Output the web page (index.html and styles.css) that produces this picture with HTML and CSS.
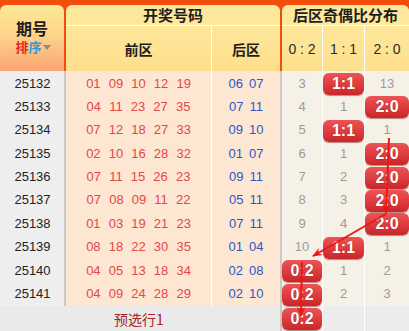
FILE: index.html
```
<!DOCTYPE html>
<html lang="zh">
<head>
<meta charset="utf-8">
<title>开奖号码 后区奇偶比分布</title>
<link rel="stylesheet" href="styles.css">
</head>
<body>
<div class="board">
  <div class="head">
    <div class="h-no">
      <div class="h-title">期号</div>
      <div class="sort"><span class="s1">排</span><span class="s2">序</span><span class="tri"></span></div>
    </div>
    <div class="h-group">
      <div class="h-cap">开奖号码</div>
      <div class="h-subs draw-subs"><div>前区</div><div>后区</div></div>
    </div>
    <div class="h-group">
      <div class="h-cap">后区奇偶比分布</div>
      <div class="h-subs dist-subs"><div>0 : 2</div><div>1 : 1</div><div>2 : 0</div></div>
    </div>
  </div>

  <div class="rows">
    <div class="row"><div class="no">25132</div><div class="front">01 09 10 12 19</div><div class="back">06 07</div><div class="d a">3</div><div class="d b"><span class="badge">1:1</span></div><div class="d c">13</div></div>
    <div class="row"><div class="no">25133</div><div class="front">04 11 23 27 35</div><div class="back">07 11</div><div class="d a">4</div><div class="d b">1</div><div class="d c"><span class="badge">2:0</span></div></div>
    <div class="row"><div class="no">25134</div><div class="front">07 12 18 27 33</div><div class="back">09 10</div><div class="d a">5</div><div class="d b"><span class="badge">1:1</span></div><div class="d c">1</div></div>
    <div class="row"><div class="no">25135</div><div class="front">02 10 16 28 32</div><div class="back">01 07</div><div class="d a">6</div><div class="d b">1</div><div class="d c"><span class="badge">2:0</span></div></div>
    <div class="row row-split"><div class="no">25136</div><div class="front">07 11 15 26 23</div><div class="back">09 11</div><div class="d a">7</div><div class="d b">2</div><div class="d c"><span class="badge">2:0</span></div></div>
    <div class="row"><div class="no">25137</div><div class="front">07 08 09 11 22</div><div class="back">05 11</div><div class="d a">8</div><div class="d b">3</div><div class="d c"><span class="badge">2:0</span></div></div>
    <div class="row"><div class="no">25138</div><div class="front">01 03 19 21 23</div><div class="back">07 11</div><div class="d a">9</div><div class="d b">4</div><div class="d c"><span class="badge">2:0</span></div></div>
    <div class="row"><div class="no">25139</div><div class="front">08 18 22 30 35</div><div class="back">01 04</div><div class="d a">10</div><div class="d b"><span class="badge">1:1</span></div><div class="d c">1</div></div>
    <div class="row"><div class="no">25140</div><div class="front">04 05 13 18 34</div><div class="back">02 08</div><div class="d a"><span class="badge">0:2</span></div><div class="d b">1</div><div class="d c">2</div></div>
    <div class="row"><div class="no">25141</div><div class="front">04 09 24 28 29</div><div class="back">02 10</div><div class="d a"><span class="badge">0:2</span></div><div class="d b">2</div><div class="d c">3</div></div>
    <div class="row preview"><div class="no"></div><div class="front pv-text">预选行1</div><div class="back"></div><div class="d a"><span class="badge">0:2</span></div><div class="d b"></div><div class="d c"></div></div>
  </div>

  <svg class="trend" width="409" height="331" viewBox="0 0 409 331">
    <defs>
      <marker id="ah" markerWidth="10" markerHeight="8" refX="9" refY="4" orient="auto" markerUnits="userSpaceOnUse">
        <path d="M0,0 L10,4 L0,8 L3,4 Z" fill="#ee1515"/>
      </marker>
    </defs>
    <line x1="389" y1="138" x2="386" y2="213" stroke="#ee1515" stroke-width="2" marker-end="url(#ah)"/>
    <line x1="386" y1="214" x2="313" y2="256" stroke="#ee1515" stroke-width="2" marker-end="url(#ah)"/>
    <line x1="302" y1="262" x2="301" y2="316" stroke="#ee1515" stroke-width="2" marker-end="url(#ah)"/>
  </svg>
</div>
</body>
</html>
```

FILE: styles.css
```
html, body {
  margin: 0;
  padding: 0;
  background: #ffffff;
}

.board {
  position: relative;
  width: 409px;
  height: 331px;
  overflow: hidden;
  font-family: "Liberation Sans", Arial, "Noto Sans CJK SC", sans-serif;
}

/* ---------- header ---------- */
.head {
  display: grid;
  grid-template-columns: 64px 214px 1fr;
  column-gap: 2px;
  height: 71px;
  box-sizing: border-box;
  padding-top: 5px;
  background: #f14d0b;
  font-family: "Noto Sans CJK SC", "Liberation Sans", sans-serif;
  color: #1e1e1e;
}

.h-no {
  border-radius: 6px 6px 0 0;
  background: linear-gradient(#fee899 0%, #fdd58a 45%, #fba473 100%);
  display: flex;
  flex-direction: column;
  align-items: center;
  padding-top: 15px;
  box-sizing: border-box;
}

.h-title {
  font-size: 16px;
  font-weight: bold;
  line-height: 17px;
}

.sort {
  display: flex;
  align-items: center;
  font-size: 13px;
  font-weight: bold;
  line-height: 14px;
  margin-top: 3px;
  margin-left: 2px;
}

.s1 { color: #e4262a; }
.s2 { color: #2c9be2; }

.tri {
  width: 0;
  height: 0;
  border-left: 4px solid transparent;
  border-right: 4px solid transparent;
  border-top: 5px solid #8c8c8c;
  margin-left: 1px;
}

.h-group {
  display: grid;
  grid-template-rows: 20px 1fr;
  row-gap: 1px;
}

.h-cap {
  background: #fee89b;
  border-radius: 6px 6px 0 0;
  font-size: 15px;
  font-weight: bold;
  line-height: 20px;
  text-align: center;
  white-space: nowrap;
  box-shadow: 0 1px 0 #ffffff;
}

.h-subs {
  display: grid;
  column-gap: 1px;
  background: #ffffff;
}

.h-subs > div {
  background: linear-gradient(#fee69a, #fde08c);
  display: flex;
  align-items: center;
  justify-content: center;
}

.draw-subs {
  grid-template-columns: 145px 1fr;
  font-size: 14px;
  font-weight: bold;
}

.dist-subs {
  grid-template-columns: 40px 41px 1fr;
  font-family: "Liberation Sans", Arial, sans-serif;
  font-size: 14px;
  color: #2a2a2a;
}

/* ---------- body rows ---------- */
.rows {
  display: flex;
  flex-direction: column;
}

.row {
  display: grid;
  grid-template-columns: 66px 146px 70px 41px 42px 1fr;
  height: 23.4px;
  box-sizing: border-box;
  border-bottom: 1px solid #ffffff;
  font-size: 13px;
}

.row-split {
  border-bottom: 2px solid #d9d9d9;
}

.row > div {
  display: flex;
  align-items: center;
  justify-content: center;
  box-sizing: border-box;
}

.no {
  background: #eeeeef;
  color: #222222;
  border-right: 2px solid #c9c9c9;
  padding-left: 1px;
}

.front {
  background: #fde6d2;
  color: #e6474b;
  border-right: 1px solid #ffffff;
  word-spacing: 4.5px;
}

.back {
  background: #fde6d2;
  color: #2c58c8;
  border-right: 2px solid #c9c9c9;
  word-spacing: 2.5px;
}

.d {
  background: #f6f1e6;
  color: #9b9b9b;
}

.d.a, .d.b {
  border-right: 1px solid #ffffff;
}

.badge {
  position: relative;
  z-index: 1;
  align-self: flex-start;
  margin-top: 2px;
  width: 100%;
  height: 22px;
  box-sizing: border-box;
  border-radius: 6px;
  background: linear-gradient(#ec5456 0%, #dd3a3d 55%, #c7262a 100%);
  box-shadow: 0 1px 1px rgba(120, 0, 0, 0.45);
  color: #ffffff;
  font-size: 16px;
  font-weight: bold;
  line-height: 22px;
  text-align: center;
  text-shadow: 0 0 1px rgba(120, 0, 0, 0.6);
}

.d.c .badge {
  width: calc(100% + 1px);
}

/* ---------- preview row ---------- */
.row.preview {
  height: 27px;
  border-bottom: 0;
  margin-top: 1px;
}

.preview .no,
.preview .front,
.preview .back {
  background: #eaeaea;
  border-right: 0;
}

.preview .back {
  border-right: 2px solid #c9c9c9;
}

.preview .d {
  background: #ececec;
}

.pv-text {
  color: #a3242a;
  font-family: "Noto Sans CJK SC", "Liberation Sans", sans-serif;
  font-size: 14px;
}

/* ---------- trend overlay ---------- */
.trend {
  position: absolute;
  left: 0;
  top: 0;
  pointer-events: none;
  z-index: 2;
}
```
